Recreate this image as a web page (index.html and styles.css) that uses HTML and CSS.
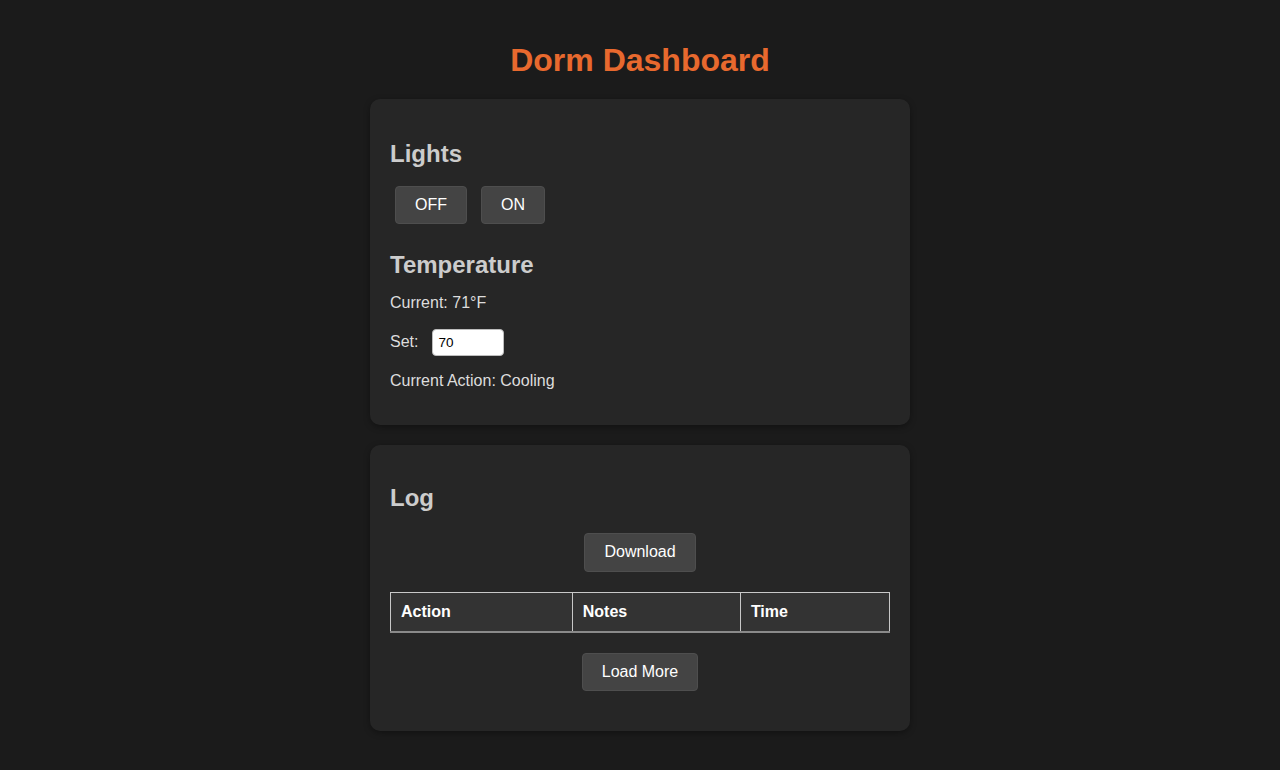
FILE: index.html
```html
<!DOCTYPE html>
<html lang="en">
<head>
<meta charset="utf-8">
<title>Dorm Dashboard</title>
<link rel="stylesheet" href="styles.css">
</head>
<body>
<main class="page">
  <h1 class="title">Dorm Dashboard</h1>

  <section class="card">
    <h2 class="card-heading">Lights</h2>
    <div class="light-row">
      <button class="btn">OFF</button>
      <button class="btn">ON</button>
    </div>

    <h2 class="card-heading">Temperature</h2>
    <p class="info first">Current: 71°F</p>
    <div class="set-row">
      <label class="set-label" for="setpoint">Set:</label>
      <input class="set-input" id="setpoint" type="text" value="70">
    </div>
    <p class="info last">Current Action: Cooling</p>
  </section>

  <section class="card">
    <h2 class="card-heading log-heading">Log</h2>
    <div class="center-row top-row">
      <button class="btn">Download</button>
    </div>
    <table class="log-table">
      <thead>
        <tr>
          <th>Action</th>
          <th>Notes</th>
          <th>Time</th>
        </tr>
      </thead>
      <tbody></tbody>
    </table>
    <div class="center-row">
      <button class="btn">Load More</button>
    </div>
  </section>
</main>
</body>
</html>
```

FILE: styles.css
```css
* {
  box-sizing: border-box;
}

html, body {
  margin: 0;
  background: #1b1b1b;
}

body {
  font-family: "Liberation Sans", Arial, sans-serif;
  color: #dddddd;
}

.page {
  width: 540px;
  margin: 0 auto;
  padding: 42px 0 40px;
}

.title {
  margin: 0 0 20px;
  font-size: 32px;
  line-height: 37px;
  font-weight: bold;
  text-align: center;
  color: #e8692e;
}

.card {
  background: #262626;
  border-radius: 10px;
  padding: 20px;
  margin-bottom: 20px;
  box-shadow: 0 2px 6px rgba(0, 0, 0, 0.35);
  display: flow-root;
}

.card-heading {
  margin: 21px 0 0;
  font-size: 24px;
  line-height: 28px;
  font-weight: bold;
  color: #cccccc;
}

.card-heading.log-heading {
  margin-top: 19px;
}

.btn {
  font-family: "Liberation Sans", Arial, sans-serif;
  font-size: 16px;
  line-height: 18.4px;
  color: #ffffff;
  background: #444444;
  border: 1px solid #4e4e4e;
  border-radius: 4px;
  padding: 9px 19px;
  cursor: pointer;
}

.light-row {
  display: flex;
  gap: 14px;
  padding: 0 5px;
  margin: 18px 0 27px;
}

.info {
  margin: 16px 0;
  font-size: 16px;
  line-height: 18.4px;
  color: #dddddd;
}

.info.first {
  margin-top: 15px;
}

.info.last {
  margin-bottom: 15px;
}

.set-row {
  display: flex;
  align-items: baseline;
  margin: 15px 0 15px;
}

.set-label {
  font-size: 16px;
  line-height: 18.4px;
  margin-right: 14px;
  color: #dddddd;
}

.set-input {
  width: 72px;
  height: 27px;
  padding: 5px;
  border: 1px solid #bdbdbd;
  border-radius: 4px;
  background: #ffffff;
  color: #000000;
  font-family: "Liberation Sans", Arial, sans-serif;
  font-size: 13.5px;
}

.center-row {
  display: flex;
  justify-content: center;
  margin: 20px 0;
}

.center-row.top-row {
  margin-top: 21px;
}

.log-table {
  width: 100%;
  border-collapse: collapse;
  margin: 20px 0;
}

.log-table th {
  background: #333333;
  color: #ffffff;
  font-size: 16px;
  line-height: 18.4px;
  font-weight: bold;
  text-align: left;
  padding: 10px;
  border: 1px solid #c8c8c8;
  border-bottom: 2px solid #8a8a8a;
}
```
